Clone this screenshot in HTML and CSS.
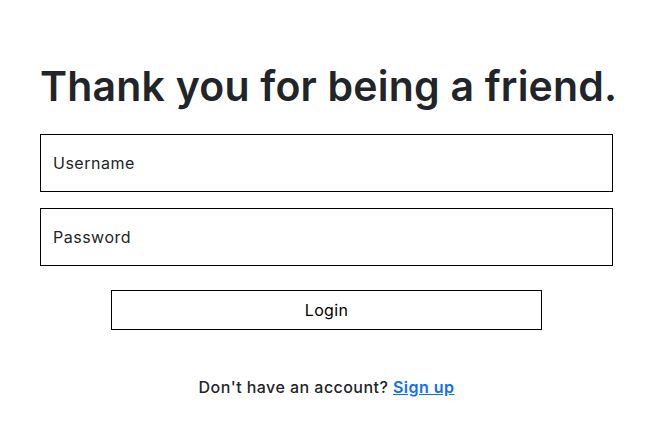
FILE: index.html
```html
<!DOCTYPE html>
<html lang="en">
<head>
<meta charset="utf-8">
<title>Login</title>
<link rel="stylesheet" href="styles.css">
</head>
<body>
<main class="page">
  <h1 class="title">Thank you for being a friend.</h1>
  <form class="form">
    <div class="field"><span class="field-label">Username</span></div>
    <div class="field"><span class="field-label">Password</span></div>
    <button class="btn" type="button">Login</button>
  </form>
  <p class="signup">Don't have an account? <a class="signup-link" href="#">Sign up</a></p>
</main>
</body>
</html>
```
FILE: styles.css
```css
* { box-sizing: border-box; }
html, body { margin: 0; background: #fff; }
body {
  font-family: Inter, "Noto Sans", sans-serif;
  color: #212529;
}
.page {
  width: 573px;
  margin-left: 40px;
  padding-top: 62px;
  display: flex;
  flex-direction: column;
}
.title {
  margin: 0 0 24px;
  font-size: 41px;
  line-height: 48px;
  font-weight: 600;
  text-align: center;
  letter-spacing: 0.2px;
  white-space: nowrap;
}
.form {
  display: flex;
  flex-direction: column;
  gap: 16px;
}
.field {
  height: 58px;
  border: 1px solid #000;
  padding: 0 12px;
  display: flex;
  align-items: center;
  font-size: 16px;
  letter-spacing: 0.5px;
}
.btn {
  margin: 8px auto 0;
  width: 431px;
  height: 40px;
  border: 1px solid #000;
  background: #fff;
  font-family: inherit;
  font-size: 16px;
  letter-spacing: 0.3px;
  color: #000;
}
.signup {
  margin: 45px 0 0;
  text-align: center;
  font-size: 16px;
  line-height: 24px;
  font-weight: 500;
  letter-spacing: 0.45px;
}
.signup-link {
  color: #0d6efd;
  font-weight: 600;
}
```
